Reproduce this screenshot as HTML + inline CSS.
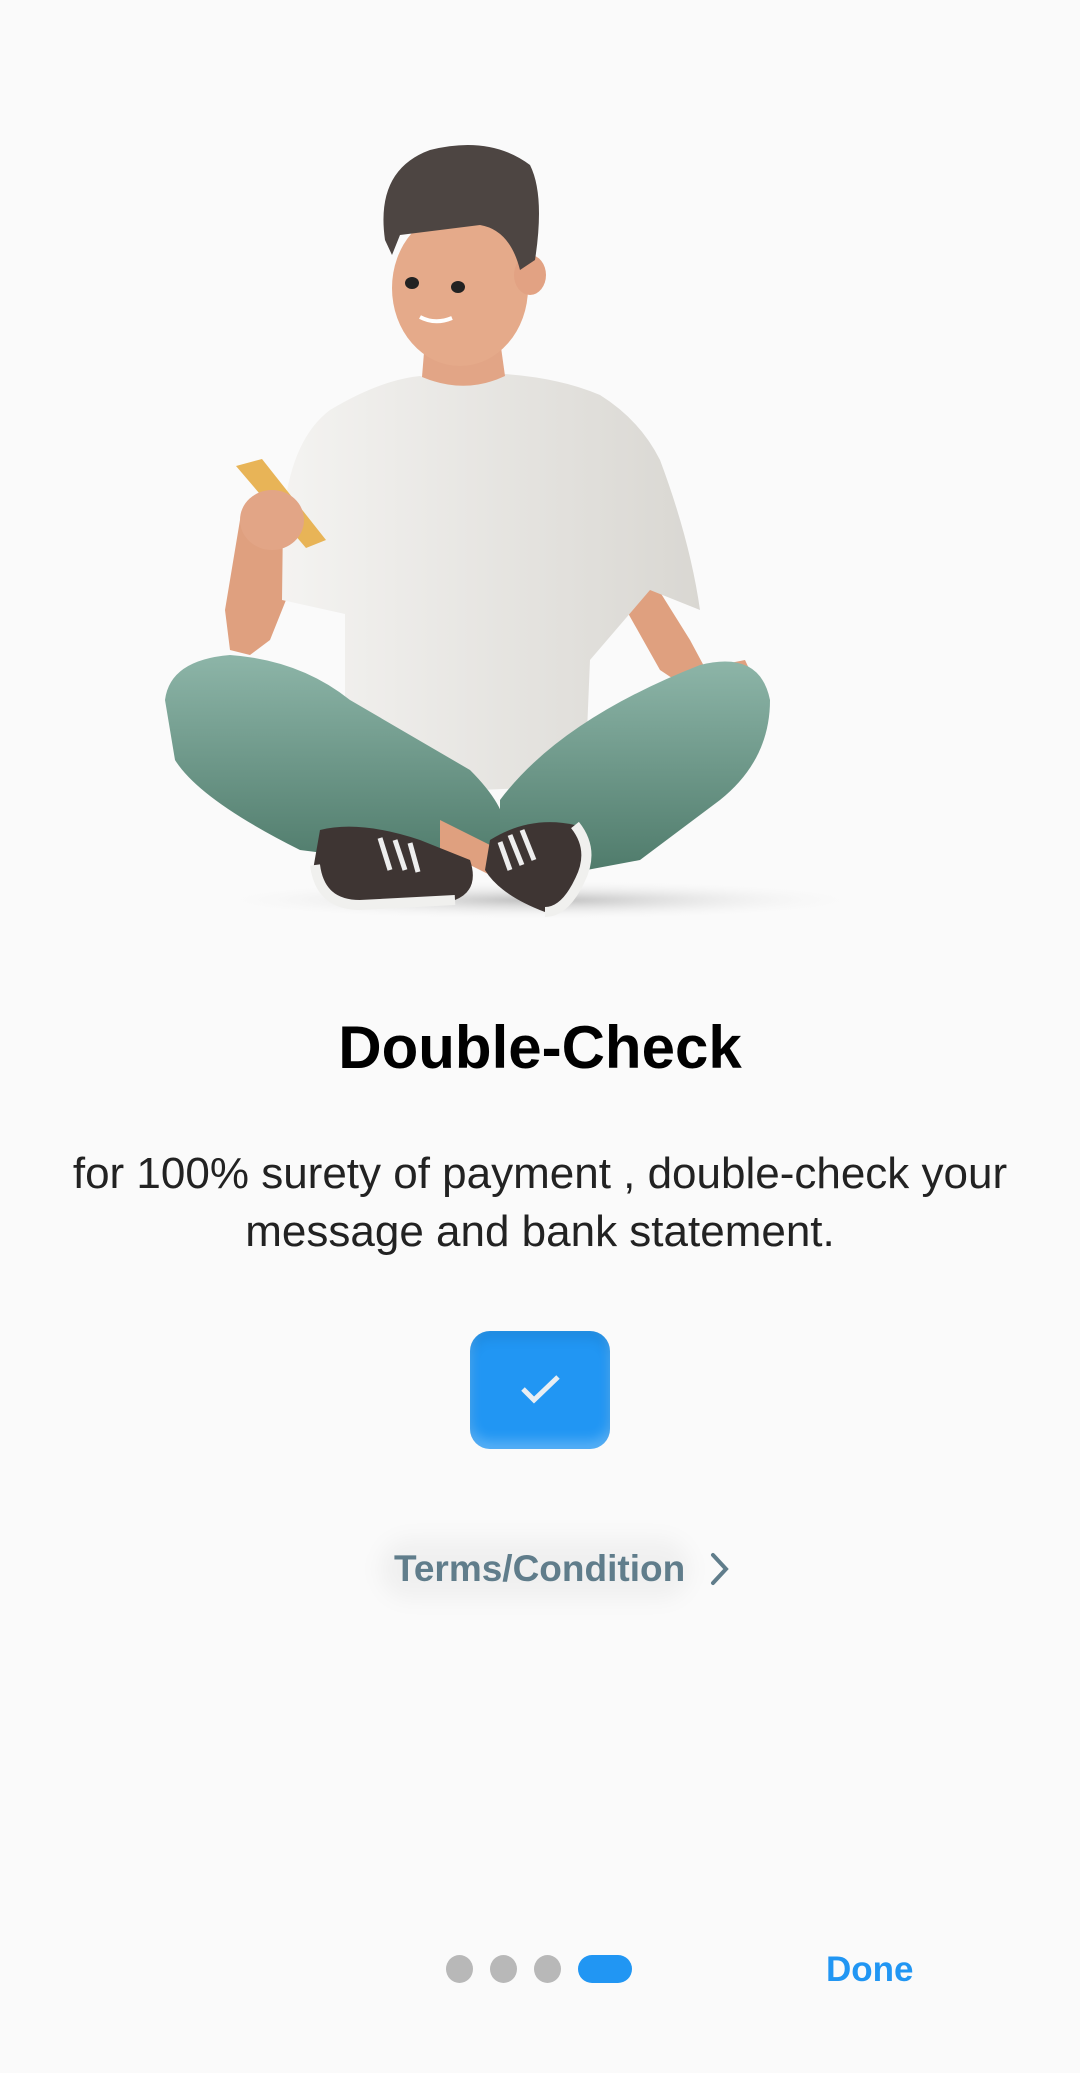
<!DOCTYPE html>
<html><head><meta charset="utf-8"><style>
html,body{margin:0;padding:0;background:#fafafa;width:1080px;height:2073px;overflow:hidden;font-family:"Liberation Sans",sans-serif;}
.abs{position:absolute;}
</style></head><body>
<svg class="abs" style="left:0;top:0" width="1080" height="960" viewBox="0 0 1080 960">
<defs>
<radialGradient id="sh" cx="50%" cy="50%" r="50%"><stop offset="0" stop-color="#bdbdbd"/><stop offset="1" stop-color="#fafafa" stop-opacity="0"/></radialGradient>
<linearGradient id="shirt" x1="0" x2="1"><stop offset="0" stop-color="#f4f3f1"/><stop offset="1" stop-color="#d9d7d2"/></linearGradient>
<linearGradient id="pant" x1="0" y1="0" x2="0" y2="1"><stop offset="0" stop-color="#8db5a8"/><stop offset="1" stop-color="#4e7a6a"/></linearGradient>
</defs>
<ellipse cx="540" cy="900" rx="330" ry="20" fill="url(#sh)"/>
<path d="M640 560 L690 640 L705 668 L745 660 L752 675 L690 690 L660 670 L615 590Z" fill="#dfa07f"/>
<path d="M290 590 L270 640 L250 655 L230 650 L225 610 L240 520 L300 510 L330 560Z" fill="#dfa07f"/>
<path d="M420 376 Q380 380 330 410 Q290 440 283 520 L282 600 L345 614 L345 780 Q470 800 585 780 L590 660 L650 590 L700 610 Q690 540 660 460 Q640 420 600 395 Q560 378 505 374 Q470 392 420 376Z" fill="url(#shirt)"/>
<path d="M425 340 L500 340 L505 376 Q465 395 422 377Z" fill="#e2a586"/>
<path d="M165 700 Q170 660 230 655 Q300 660 350 700 L470 770 Q520 820 500 850 L430 870 Q380 860 300 850 Q200 800 175 760Z" fill="url(#pant)"/>
<path d="M500 800 Q560 720 700 665 Q760 650 770 700 Q770 760 720 800 L640 860 L560 875 L500 860Z" fill="url(#pant)"/>
<path d="M440 820 L520 860 L500 880 L440 850Z" fill="#dfa07f"/>
<path d="M320 830 Q360 820 420 840 L470 860 Q480 890 455 900 L360 905 Q315 900 313 870Z" fill="#3e3533"/>
<path d="M315 865 Q320 905 360 905 L455 900" stroke="#f0f0ee" stroke-width="10" fill="none"/>
<path d="M490 840 Q530 815 575 825 Q590 840 580 875 Q565 910 545 912 Q500 895 485 870Z" fill="#3e3533"/>
<path d="M575 825 Q595 850 580 880 Q565 912 545 912" stroke="#f0f0ee" stroke-width="10" fill="none"/>
<g stroke="#eee" stroke-width="5"><line x1="380" y1="838" x2="390" y2="870"/><line x1="395" y1="840" x2="405" y2="870"/><line x1="410" y1="843" x2="418" y2="872"/><line x1="500" y1="842" x2="510" y2="870"/><line x1="510" y1="835" x2="522" y2="865"/><line x1="522" y1="830" x2="534" y2="860"/></g>
<path d="M236 466 L262 459 L326 540 L306 548Z" fill="#e8b457"/>
<ellipse cx="272" cy="520" rx="32" ry="30" fill="#e2a586"/>
<ellipse cx="460" cy="288" rx="68" ry="78" fill="#e5aa8a"/>
<ellipse cx="530" cy="275" rx="16" ry="20" fill="#e2a283"/>
<path d="M385 240 Q375 170 430 150 Q490 135 530 165 Q545 195 535 260 L520 270 Q510 230 480 225 Q440 230 400 235 L392 255Z" fill="#4d4542"/>
<ellipse cx="412" cy="283" rx="7" ry="6" fill="#222"/>
<ellipse cx="458" cy="287" rx="7" ry="6" fill="#222"/>
<path d="M420 317 Q435 325 452 318" stroke="#fff" stroke-width="4" fill="none"/>
</svg>
<div class="abs" style="left:0;width:1080px;top:1013px;text-align:center;font-weight:bold;font-size:60px;color:#000;">Double-Check</div>
<div class="abs" style="left:0;width:1080px;top:1145px;text-align:center;font-size:44px;line-height:58px;color:#222;">for 100% surety of payment , double-check your<br>message and bank statement.</div>
<div class="abs" style="left:470px;top:1331px;width:140px;height:118px;border-radius:20px;background:#2196f3;box-shadow:inset 0 -8px 12px rgba(255,255,255,.25),inset 0 8px 12px rgba(0,0,0,.08);"></div>
<svg class="abs" style="left:520px;top:1372px" width="42" height="36" viewBox="0 0 42 36"><path d="M3 17 L14 28 L38 5" stroke="#e8eef3" stroke-width="5" fill="none"/></svg>
<div class="abs" style="left:380px;top:1539px;width:310px;height:60px;border-radius:30px;background:rgba(0,0,0,.04);filter:blur(10px)"></div>
<div class="abs" style="left:394px;top:1548px;font-weight:bold;font-size:37px;color:#607d8b;">Terms/Condition</div>
<svg class="abs" style="left:708px;top:1551px" width="24" height="36" viewBox="0 0 24 36"><path d="M5 4 L18 18 L5 32" stroke="#607d8b" stroke-width="4" fill="none" stroke-linecap="round"/></svg>
<div class="abs" style="left:446px;top:1955px;width:27px;height:28px;border-radius:50%;background:#b8b8b8"></div>
<div class="abs" style="left:490px;top:1955px;width:27px;height:28px;border-radius:50%;background:#b8b8b8"></div>
<div class="abs" style="left:534px;top:1955px;width:27px;height:28px;border-radius:50%;background:#b8b8b8"></div>
<div class="abs" style="left:578px;top:1955px;width:54px;height:28px;border-radius:14px;background:#2196f3"></div>
<div class="abs" style="left:826px;top:1950px;font-weight:bold;font-size:35px;color:#2196f3;">Done</div>
</body></html>
